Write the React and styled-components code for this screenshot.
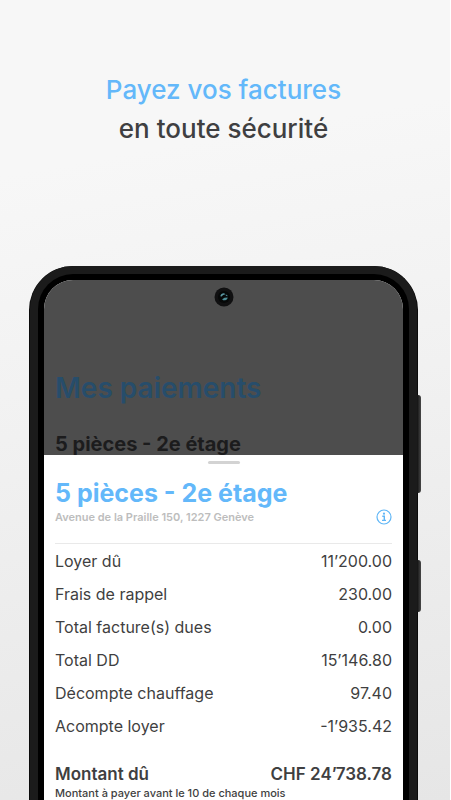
import styled, { createGlobalStyle } from "styled-components";

const charges = [
  { label: "Loyer dû", amount: "11’200.00" },
  { label: "Frais de rappel", amount: "230.00" },
  { label: "Total facture(s) dues", amount: "0.00" },
  { label: "Total DD", amount: "15’146.80" },
  { label: "Décompte chauffage", amount: "97.40" },
  { label: "Acompte loyer", amount: "-1’935.42" },
];

export default function App() {
  return (
    <>
      <GlobalStyle />
      <Page>
        <Headline>
          <span>Payez vos factures</span>
          en toute sécurité
        </Headline>
        <Phone>
          <SideButton $top={121} $height={98} />
          <SideButton $top={286} $height={52} />
          <Screen>
            <Backdrop>
              <Camera />
              <BackdropTitle>Mes paiements</BackdropTitle>
              <BackdropSubtitle>5 pièces - 2e étage</BackdropSubtitle>
            </Backdrop>
            <Sheet>
              <Handle />
              <SheetTitle>5 pièces - 2e étage</SheetTitle>
              <AddressRow>
                <address>Avenue de la Praille 150, 1227 Genève</address>
                <InfoButton type="button" aria-label="Informations">
                  <InfoIcon />
                </InfoButton>
              </AddressRow>
              <Charges>
                <tbody>
                  {charges.map(({ label, amount }) => (
                    <tr key={label}>
                      <th scope="row">{label}</th>
                      <td>{amount}</td>
                    </tr>
                  ))}
                </tbody>
              </Charges>
              <Total>
                <span>Montant dû</span>
                <span>CHF 24’738.78</span>
              </Total>
              <Note>Montant à payer avant le 10 de chaque mois</Note>
            </Sheet>
          </Screen>
        </Phone>
      </Page>
    </>
  );
}

function Camera() {
  return (
    <CameraStyled viewBox="0 0 20 20" aria-hidden="true">
      <circle cx="10" cy="10" r="9.5" fill="#101011" />
      <circle cx="10" cy="10" r="6" fill="#060808" />
      <path d="M6.3 9.2c.4-2 2-3.2 4.1-2.9l.6 1.3-2 .3-1.2 1.7z" fill="#5b98a3" />
      <path d="M11.4 7.4l1.8.5.4 1.4-1.5-.4z" fill="#477f8b" />
      <path d="M8.2 12.3l2.3-1.6 3.2-.3c-.2 2-2.4 3.3-4.6 2.9z" fill="#4f909a" />
    </CameraStyled>
  );
}

function InfoIcon() {
  return (
    <svg viewBox="0 0 16 16" width="16" height="16" fill="none" aria-hidden="true">
      <circle cx="8" cy="8" r="7" stroke="#5fb6f6" strokeWidth="1.2" />
      <circle cx="8" cy="4.7" r="1.1" fill="#5fb6f6" />
      <path d="M6.3 7.2h2v4M6 11.4h4" stroke="#5fb6f6" strokeWidth="1.4" />
    </svg>
  );
}

const GlobalStyle = createGlobalStyle`
  * {
    box-sizing: border-box;
  }

  body {
    margin: 0;
    color: #3f3f41;
    font-family: Inter, "Liberation Sans", sans-serif;
  }

  h1, h2, p {
    margin: 0;
  }
`;

const Page = styled.main`
  display: flex;
  flex-direction: column;
  min-height: 100vh;
  padding: 70px 33px 0 30px;
  background: linear-gradient(170deg, #f7f7f7 20%, #f1f1f1 50%, #e6e6e6 100%);
  border-right: 1px solid #fff;
`;

const Headline = styled.h1`
  height: 196px;
  font-size: 26px;
  font-weight: 500;
  line-height: 39px;
  text-align: center;

  span {
    display: block;
    color: #63b8fa;
  }
`;

const Phone = styled.div`
  position: relative;
  display: flex;
  flex: 1;
  padding: 6px 6px 0;
  background: #000;
  border: 8px solid #1b1b1b;
  border-bottom: 0;
  border-radius: 43px 43px 0 0;
  box-shadow: 0 1px 0 1px #0b0b0b;
`;

const SideButton = styled.span`
  position: absolute;
  top: ${({ $top }) => $top}px;
  right: -12px;
  width: 4px;
  height: ${({ $height }) => $height}px;
  background: linear-gradient(90deg, #111, #484848);
  border-radius: 0 3px 3px 0;
`;

const Screen = styled.div`
  display: flex;
  flex: 1;
  flex-direction: column;
  overflow: hidden;
  background: #fff;
  border-radius: 29px 29px 0 0;
`;

const Backdrop = styled.div`
  display: flex;
  flex-direction: column;
  height: 175px;
  padding: 7px 11px 0;
  background: #4d4d4d;
`;

const CameraStyled = styled.svg`
  align-self: center;
  flex: none;
  width: 20px;
  height: 20px;
`;

const BackdropTitle = styled.p`
  margin-top: 64px;
  color: #274d6b;
  font-size: 28px;
  font-weight: 600;
  line-height: 34px;
  white-space: nowrap;
`;

const BackdropSubtitle = styled.p`
  margin-top: 26px;
  color: #1c1c1d;
  font-size: 20px;
  font-weight: 700;
  line-height: 26px;
  white-space: nowrap;
`;

const Sheet = styled.section`
  position: relative;
  display: flex;
  flex: 1;
  flex-direction: column;
  padding: 6px 11px 0;
  background: #fff;
`;

const Handle = styled.span`
  align-self: center;
  width: 32px;
  height: 3px;
  background: #d3d3d3;
  border-radius: 2px;
`;

const SheetTitle = styled.h2`
  margin-top: 14px;
  color: #63b8fa;
  font-size: 25px;
  font-weight: 700;
  line-height: 30px;
  white-space: nowrap;
`;

const AddressRow = styled.div`
  display: flex;
  align-items: center;
  justify-content: space-between;
  height: 36px;
  padding-bottom: 17px;
  border-bottom: 1px solid #e9e9e9;

  address {
    color: #bdbdbd;
    font-size: 11px;
    font-style: normal;
    font-weight: 600;
    line-height: 16px;
  }
`;

const InfoButton = styled.button`
  display: flex;
  padding: 0;
  background: none;
  border: 0;
  cursor: pointer;
`;

const Charges = styled.table`
  width: 100%;
  margin-top: 1px;
  border-collapse: collapse;
  font-size: 16px;
  line-height: 33px;

  th,
  td {
    padding: 0;
    font-weight: 400;
    text-align: left;
    white-space: nowrap;
  }

  td {
    text-align: right;
  }
`;

const Total = styled.p`
  display: flex;
  justify-content: space-between;
  margin-top: 19px;
  font-size: 17px;
  font-weight: 600;
  line-height: 24px;
`;

const Note = styled.p`
  font-size: 11px;
  font-weight: 500;
  line-height: 14px;
`;
